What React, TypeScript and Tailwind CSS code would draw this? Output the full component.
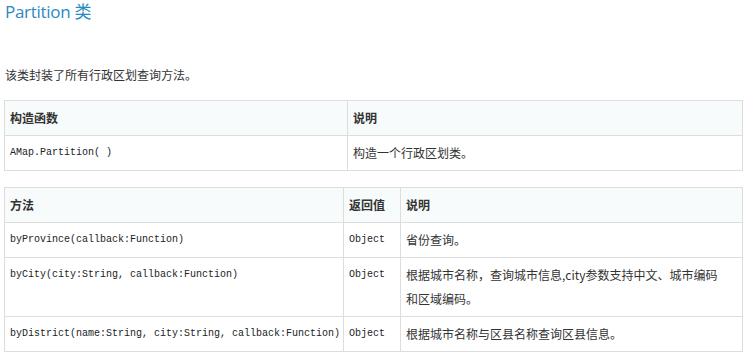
import React from "react";

const cjk = '"Noto Sans CJK SC", sans-serif';
const mono = '"Liberation Mono", "Noto Sans CJK SC", monospace';

type Method = {
    name: string;
    returns: string;
    desc: React.ReactNode;
};

const methods: Method[] = [
    { name: "byProvince(callback:Function)", returns: "Object", desc: "省份查询。" },
    {
        name: "byCity(city:String, callback:Function)",
        returns: "Object",
        desc: (
            <>
                根据城市名称，查询城市信息,city参数支持中文、城市编码
                <br />
                和区域编码。
            </>
        ),
    },
    {
        name: "byDistrict(name:String, city:String, callback:Function)",
        returns: "Object",
        desc: "根据城市名称与区县名称查询区县信息。",
    },
];

const th = "border border-[#dddddd] bg-[#f7fbfb] px-[5px] py-[5px] text-left font-bold leading-[24px]";
const td = "border border-[#dddddd] px-[5px] py-[5px] align-top leading-[24px]";
const code = "whitespace-nowrap text-[10px] text-[#222222]";

export default function App() {
    return (
        <div className="w-[751px] h-[357px] bg-white text-[#333333] text-[12px]" style={{ fontFamily: cjk }}>
            {/* Title */}
            <h2
                className="pl-[5px] pt-[1px] text-[17px] leading-[22px] tracking-[-0.3px] text-[#2a8ac4] font-normal"
                style={{ fontFamily: '"Open Sans", "Noto Sans CJK SC", sans-serif' }}
            >
                Partition 类
            </h2>

            <p className="pl-[5px] mt-[40px] leading-[24px]">该类封装了所有行政区划查询方法。</p>

            {/* Constructor table */}
            <table className="ml-[4px] mt-[13px] w-[739px] border-collapse table-fixed">
                <colgroup>
                    <col className="w-[343px]" />
                    <col />
                </colgroup>
                <thead>
                    <tr>
                        <th className={th}>构造函数</th>
                        <th className={th}>说明</th>
                    </tr>
                </thead>
                <tbody>
                    <tr>
                        <td className={`${td} ${code}`} style={{ fontFamily: mono }}>
                            AMap.Partition( )
                        </td>
                        <td className={td}>构造一个行政区划类。</td>
                    </tr>
                </tbody>
            </table>

            {/* Methods table */}
            <table className="ml-[4px] mt-[16px] w-[739px] border-collapse table-fixed">
                <colgroup>
                    <col className="w-[339px]" />
                    <col className="w-[57px]" />
                    <col />
                </colgroup>
                <thead>
                    <tr>
                        <th className={th}>方法</th>
                        <th className={th}>返回值</th>
                        <th className={th}>说明</th>
                    </tr>
                </thead>
                <tbody>
                    {methods.map((m) => (
                        <tr key={m.name}>
                            <td className={`${td} ${code}`} style={{ fontFamily: mono }}>
                                {m.name}
                            </td>
                            <td className={`${td} ${code}`} style={{ fontFamily: mono }}>
                                {m.returns}
                            </td>
                            <td className={td}>{m.desc}</td>
                        </tr>
                    ))}
                </tbody>
            </table>
        </div>
    );
}
